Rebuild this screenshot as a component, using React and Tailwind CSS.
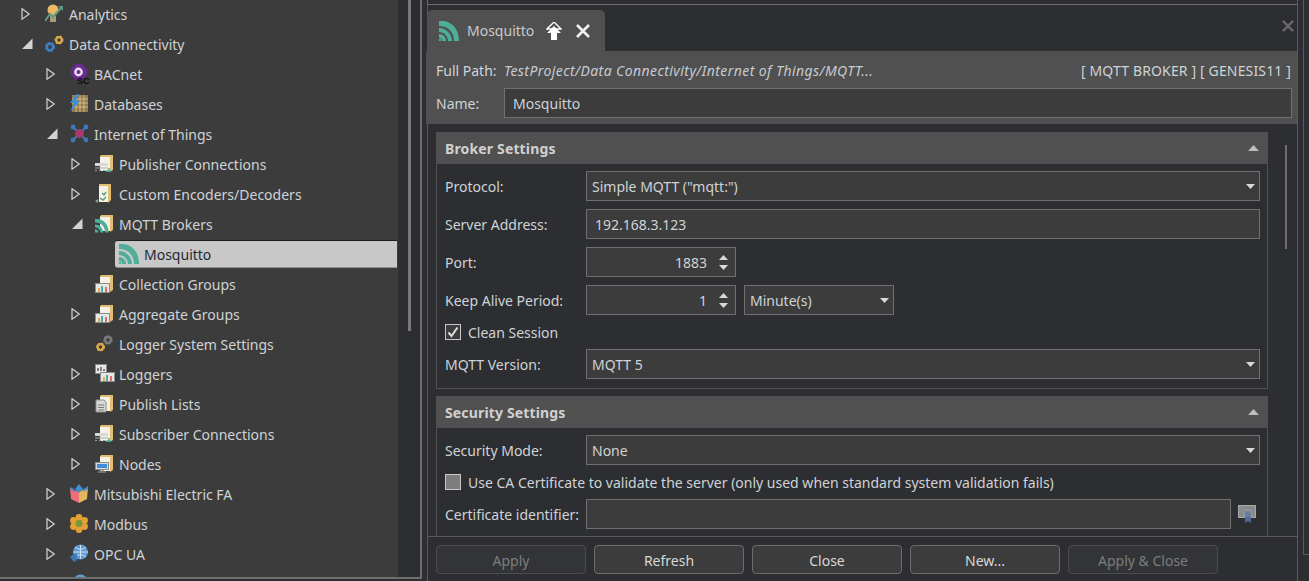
import React from "react";

const Rss = ({ s = 20 }) => (
  <svg width={s} height={s} viewBox="0 0 20 20" className="block">
    <path d="M0 0h3C13 0 20 8 20 20h-5C15 11 9 5 0 5z" fill="#4fae9a" />
    <path d="M0 7c7 0 13 6 13 13H9c0-5-4-9-9-9z" fill="#4fae9a" />
    <path d="M0 13c4 0 7 3 7 7H3c0-2-1-3-3-3z" fill="#4fae9a" />
    <rect x="0" y="18" width="2" height="2" fill="#4fae9a" />
  </svg>
);

const Box = ({ children }) => (
  <svg width="20" height="20" viewBox="0 0 20 20" className="block">{children}</svg>
);

const Folder = () => (
  <>
    <path d="M5 2h10v15H5z" fill="#f4f1e6" />
    <path d="M15 1h3v15l-3 2z" fill="#e3bd72" />
    <path d="M6 1h10l-1 2H5z" fill="#e3bd72" />
  </>
);

const ChartBox = ({ x = 0, y = 9 }) => (
  <>
    <rect x={x + 0.5} y={y + 0.5} width="14" height="9" fill="#e6e6e6" stroke="#8c8c8c" />
    <rect x={x + 3} y={y + 5} width="2" height="4" fill="#e0b050" />
    <rect x={x + 6} y={y + 3} width="2" height="6" fill="#4fae9a" />
    <rect x={x + 10} y={y + 4} width="2" height="5" fill="#e07070" />
  </>
);

const Gear = ({ cx, cy, r, c }) => (
  <g>
    <circle cx={cx} cy={cy} r={r} fill="none" stroke={c} strokeWidth={r * 0.8} />
    <circle cx={cx} cy={cy} r={r * 1.35} fill="none" stroke={c} strokeWidth={r * 0.5} strokeDasharray="2 1.6" />
  </g>
);

const icons = {
  analytics: (
    <Box>
      <circle cx="8" cy="6" r="5.5" fill="#eeb964" />
      <rect x="5" y="12" width="6" height="6" fill="#a89c80" />
      <path d="M0 17 5 10l3 3 8-9" fill="none" stroke="#5f9c86" strokeWidth="2" />
      <path d="M13 2h5v5z" fill="#5f9c86" />
    </Box>
  ),
  data: (
    <Box>
      <Gear cx={5} cy={13} r={3.2} c="#3d7fc0" />
      <Gear cx={14} cy={6} r={2.8} c="#d9a94a" />
    </Box>
  ),
  bacnet: (
    <Box>
      <path d="M6 0h6l5 5v6l-5 5H6L1 11V5z" fill="#6a2a90" />
      <circle cx="8.5" cy="8" r="4.4" fill="#e8dff0" />
      <circle cx="8.5" cy="8" r="2" fill="#6a2a90" />
      <text x="7" y="19.5" fontSize="9" fontWeight="700" fill="#0c0c0c" fontFamily="Liberation Sans, sans-serif">SC</text>
    </Box>
  ),
  databases: (
    <Box>
      <rect x="2" y="1" width="16" height="17" fill="#8f7a55" />
      <path d="M2 5h16M2 9h16M2 13h16M6 1v17M10 1v17M14 1v17" stroke="#d8b878" strokeWidth="1" />
      <path d="M7 0 0 9h4l-4 9 10-11H6l3-7z" fill="#3d8ed8" />
    </Box>
  ),
  iot: (
    <Box>
      <path d="M3 3 16 16M16 3 3 16" stroke="#3d78b8" strokeWidth="2" />
      <circle cx="3" cy="3" r="2.4" fill="#3d78b8" />
      <circle cx="16" cy="3" r="2.4" fill="#3d78b8" />
      <circle cx="3" cy="16" r="2.4" fill="#3d78b8" />
      <circle cx="16" cy="16" r="2.4" fill="#3d78b8" />
      <circle cx="9.5" cy="9.5" r="4.4" fill="#a83a70" />
    </Box>
  ),
  publisher: (
    <Box>
      <Folder />
      <rect x="0" y="9" width="13" height="3" fill="#d8d8d8" />
      <rect x="0" y="13.5" width="13" height="1" fill="#aaaaaa" />
      <path d="M0 16.5h2M4 16.5h2M8 16.5h2" stroke="#999" />
      <path d="M11 17h5M14 14v4" stroke="#4fae9a" strokeWidth="1.5" />
    </Box>
  ),
  encoders: (
    <Box>
      <path d="M4 1h9v17H4z" fill="#f4f1e6" />
      <path d="M13 0h3v16l-3 3z" fill="#e3bd72" />
      <path d="M4 0h10l-1 2H4z" fill="#e3bd72" />
      <path d="M7 9l2 2 2-3M5 14l3 2 3-3" stroke="#5f9c86" fill="none" strokeWidth="1.4" />
      <path d="M0 17l3-2v4z" fill="#8fa890" />
    </Box>
  ),
  brokers: (
    <Box>
      <Folder />
      <g transform="translate(0 5) scale(0.68)">
        <path d="M0 0h3C13 0 20 8 20 20h-5C15 11 9 5 0 5z" fill="#4fae9a" />
        <path d="M0 8c7 0 12 5 12 12H8c0-4-4-8-8-8z" fill="#4fae9a" />
        <path d="M0 15c3 0 5 2 5 5H0z" fill="#4fae9a" />
      </g>
    </Box>
  ),
  collection: (
    <Box>
      <Folder />
      <ChartBox />
    </Box>
  ),
  logger: (
    <Box>
      <Gear cx={5.5} cy={13} r={2.8} c="#d9a94a" />
      <Gear cx={13} cy={6} r={3} c="#7a7a7a" />
    </Box>
  ),
  loggers: (
    <Box>
      <rect x="0.5" y="0.5" width="11" height="9" fill="#e6e6e6" stroke="#8c8c8c" />
      <path d="M3 7V4M6 7V3M9 7V5" stroke="#555" strokeWidth="1.4" />
      <ChartBox x={5} y={8} />
    </Box>
  ),
  lists: (
    <Box>
      <Folder />
      <path d="M1 6h8l2 2v10H1z" fill="#d8d8d8" stroke="#8c8c8c" />
      <path d="M3 11h6M3 13.5h6M3 16h6" stroke="#777" />
    </Box>
  ),
  nodes: (
    <Box>
      <Folder />
      <rect x="0.5" y="8.5" width="13" height="7" fill="#d8d8d8" stroke="#8c8c8c" />
      <rect x="2" y="10" width="10" height="4" fill="#3d8ed8" />
      <path d="M5 16.5h4M3 18h8" stroke="#aaa" />
    </Box>
  ),
  mitsubishi: (
    <Box>
      <path d="M0 4l9 4v11L1 15z" fill="#ee6f78" />
      <path d="M9 8l9-5-1 12-8 4z" fill="#e7b65c" />
      <path d="M5 5l4-5 4 5-4 4z" fill="#3f8fd2" />
      <path d="M0 3l4 2 1 3-4-2zM18 2l-4 3-1 3 5-3z" fill="#3f8fd2" />
    </Box>
  ),
  modbus: (
    <Box>
      <circle cx="9" cy="3.5" r="3.4" fill="#e5a035" />
      <circle cx="9" cy="15.5" r="3.4" fill="#e5a035" />
      <circle cx="3.5" cy="6.5" r="3.4" fill="#e5a035" />
      <circle cx="14.5" cy="6.5" r="3.4" fill="#e5a035" />
      <circle cx="3.5" cy="12.5" r="3.4" fill="#e5a035" />
      <circle cx="14.5" cy="12.5" r="3.4" fill="#e5a035" />
      <circle cx="9" cy="9.5" r="3.2" fill="#6e9a3a" />
    </Box>
  ),
  opc: (
    <Box>
      <circle cx="10.5" cy="8" r="7.5" fill="#5f9bd6" />
      <path d="M3 8h15M10.5 1v14M5 3c3 3 8 3 11 0M5 13c3-3 8-3 11 0" stroke="#d9e7f4" fill="none" strokeWidth="0.9" />
      <path d="M0 13l4-3h3v6l-3 2z" fill="#3d78b8" />
    </Box>
  ),
  globe: (
    <Box>
      <circle cx="10.5" cy="8" r="7.5" fill="#5f9bd6" />
    </Box>
  ),
};

const tree = [
  { l: "pl-[0px]", a: "r", i: "analytics", t: "Analytics" },
  { l: "pl-[0px]", a: "d", i: "data", t: "Data Connectivity" },
  { l: "pl-[25px]", a: "r", i: "bacnet", t: "BACnet" },
  { l: "pl-[25px]", a: "r", i: "databases", t: "Databases" },
  { l: "pl-[25px]", a: "d", i: "iot", t: "Internet of Things" },
  { l: "pl-[50px]", a: "r", i: "publisher", t: "Publisher Connections" },
  { l: "pl-[50px]", a: "r", i: "encoders", t: "Custom Encoders/Decoders" },
  { l: "pl-[50px]", a: "d", i: "brokers", t: "MQTT Brokers" },
  { sel: true },
  { l: "pl-[50px]", i: "collection", t: "Collection Groups" },
  { l: "pl-[50px]", a: "r", i: "collection", t: "Aggregate Groups" },
  { l: "pl-[50px]", i: "logger", t: "Logger System Settings" },
  { l: "pl-[50px]", a: "r", i: "loggers", t: "Loggers" },
  { l: "pl-[50px]", a: "r", i: "lists", t: "Publish Lists" },
  { l: "pl-[50px]", a: "r", i: "publisher", t: "Subscriber Connections" },
  { l: "pl-[50px]", a: "r", i: "nodes", t: "Nodes" },
  { l: "pl-[25px]", a: "r", i: "mitsubishi", t: "Mitsubishi Electric FA" },
  { l: "pl-[25px]", a: "r", i: "modbus", t: "Modbus" },
  { l: "pl-[25px]", a: "r", i: "opc", t: "OPC UA" },
  { l: "pl-[25px]", a: "r", i: "globe", t: "" },
];

const Arrow = ({ kind }) => {
  if (kind === "r")
    return (
      <svg width="12" height="12" viewBox="0 0 12 12" className="block">
        <path d="M1 .8 8.2 6 1 11.2z" fill="none" stroke="#d2d2d2" strokeWidth="1.2" />
      </svg>
    );
  if (kind === "d")
    return (
      <svg width="12" height="12" viewBox="0 0 12 12" className="block">
        <path d="M1 11 11.5 11V.5z" fill="#d2d2d2" />
      </svg>
    );
  return null;
};

const TreeRow = ({ r }) => {
  if (r.sel)
    return (
      <div className="h-[30px] pl-[115px] pr-px pt-px">
        <div className="h-[28px] flex items-center pl-1 bg-[#c8c8c8] border-t border-t-[#1e1e1e] border-b border-b-[#8e8e8e] rounded-l-[3px] text-[#1f2a36]">
          <Rss />
          <span className="ml-[5px]">Mosquitto</span>
        </div>
      </div>
    );
  return (
    <div className={`h-[30px] flex items-center ${r.l}`}>
      <div className="w-[12px] ml-[21px]"><Arrow kind={r.a} /></div>
      <div className="w-[20px] ml-[12px] shrink-0">{icons[r.i]}</div>
      <span className="ml-[4px] whitespace-nowrap">{r.t}</span>
    </div>
  );
};

const Caret = () => (
  <svg width="9" height="5" viewBox="0 0 9 5" className="block"><path d="M0 0h9L4.5 5z" fill="#d8d8d8" /></svg>
);
const CaretUp = ({ w = 9, h = 5, c = "#d8d8d8" }) => (
  <svg width={w} height={h} viewBox="0 0 9 5" className="block"><path d="M0 5h9L4.5 0z" fill={c} /></svg>
);

const Field = ({ w = "flex-1", children, className = "" }) => (
  <div className={`h-[30px] ${w} flex items-center px-[5px] bg-[#3c3c3c] border border-[#707070] whitespace-nowrap ${className}`}>
    {children}
  </div>
);

const Combo = ({ w, text }) => (
  <Field w={w} className="justify-between pr-[4px]">
    <span>{text}</span>
    <Caret />
  </Field>
);

const Spin = ({ value }) => (
  <div className="h-[30px] w-[150px] flex items-center justify-end pr-[7px] bg-[#3c3c3c] border border-[#707070]">
    <span>{value}</span>
    <div className="ml-[12px] flex flex-col gap-[5px]">
      <CaretUp />
      <Caret />
    </div>
  </div>
);

const Row = ({ label, children, className = "mt-2" }) => (
  <div className={`flex items-center ${className}`}>
    <span className="w-[141px] shrink-0 whitespace-nowrap">{label}</span>
    {children}
  </div>
);

const Check = ({ on, label }) => (
  <div className="flex items-center h-[16px] mt-[9px]">
    <div className={`w-[16px] h-[16px] border border-[#c8c8c8] flex items-center justify-center ${on ? "bg-[#3c3c3c]" : "bg-[#7d7d7d]"}`}>
      {on && (
        <svg width="12" height="12" viewBox="0 0 12 12" className="block">
          <path d="M1.5 6.5 4.5 10 10.5 1.5" fill="none" stroke="#dcdcdc" strokeWidth="2" />
        </svg>
      )}
    </div>
    <span className="ml-[7px] whitespace-nowrap">{label}</span>
  </div>
);

const Group = ({ title, children, className = "" }) => (
  <div className={className}>
    <div className="h-[32px] bg-[#505050] flex items-center justify-between pl-[9px] pr-[9px] w-[832px]">
      <span className="font-bold text-[#d0d0d0] tracking-[0.15px]">{title}</span>
      <CaretUp w={11} h={6} c="#bdbdbd" />
    </div>
    <div className="border-x border-b border-[#505050] pl-[8px] pr-[7px] pt-[7px] pb-[9px] w-[832px]">{children}</div>
  </div>
);

const Btn = ({ children, off }) => (
  <button className={`w-[150px] h-[29px] pt-[2px] rounded-[4px] border flex items-center justify-center ${off ? "border-[#4c4c4c] bg-[#333437] text-[#7c7c7c]" : "border-[#6c6c6c] bg-[#3c3c3c] text-[#d8d8d8]"}`}>
    {children}
  </button>
);

export default function App() {
  return (
    <div className="w-[1309px] h-[581px] flex overflow-hidden bg-[#2d2e32] text-[#cfd3d6] text-[14px] tracking-normal font-['Open_Sans','Noto_Sans',sans-serif]">
      {/* tree */}
      <div className="w-[422px] h-[579px] shrink-0 flex border-r-2 border-b-2 border-[#6e6e6e]">
        <div className="w-[398px] bg-[#3c3c3c] overflow-hidden">
          <div className="-mt-px">
            {tree.map((r, i) => <TreeRow key={i} r={r} />)}
          </div>
        </div>
        <div className="w-[22px] pl-[10px]">
          <div className="w-[3px] h-[331px] bg-[#7a7a7a]" />
        </div>
      </div>

      {/* editor */}
      <div className="ml-[5px] w-[871px] shrink-0 flex flex-col h-[581px] border-r border-[#5a5a5a]">
        <div className="h-[5px] border-b border-l border-[#6e6e6e]" />
        <div className="h-[46px] flex justify-between pt-[5px] border-l border-[#5a5a5a]">
          <div className="w-[178px] -ml-px h-[41px] bg-[#505050] rounded-t-[5px] flex items-center pl-3">
            <Rss />
            <span className="ml-2 text-[#c6c9cb]">Mosquitto</span>
            <svg width="16" height="18" viewBox="0 0 16 18" className="block ml-3">
              <path d="M8 0 15 7H1z" fill="none" stroke="#fff" strokeWidth="1.4" />
              <path d="M8 4 15 11H11V18H5V11H1z" fill="#fff" />
            </svg>
            <svg width="16" height="16" viewBox="0 0 16 16" className="block ml-[13px]">
              <path d="M2 2 14 14M14 2 2 14" stroke="#f2f2f2" strokeWidth="2.6" />
            </svg>
          </div>
          <svg width="12" height="12" viewBox="0 0 12 12" className="block mt-[10px] mr-[3px]">
            <path d="M1 1 11 11M11 1 1 11" stroke="#6c6c6c" strokeWidth="2.4" />
          </svg>
        </div>

        <div className="h-[73px] bg-[#505050] pl-[10px] pr-[5px] -ml-px">
          <div className="h-[37px] pt-[2px] flex items-center justify-between">
            <div className="flex">
              <span className="w-[68px]">Full Path:</span>
              <span className="italic text-[#c6cbd0] tracking-[0.42px]">TestProject/Data Connectivity/Internet of Things/MQTT...</span>
            </div>
            <span className="mr-px tracking-[0.15px]">[ MQTT BROKER ] [ GENESIS11 ]</span>
          </div>
          <div className="flex items-center">
            <span className="w-[68px] shrink-0">Name:</span>
            <Field w="w-[788px] shrink-0"><span className="pl-[3px] text-[#cbd3d9]">Mosquitto</span></Field>
          </div>
        </div>

        <div className="h-[412px] flex overflow-hidden border-l border-[#5a5a5a]">
          <div className="w-[840px] shrink-0 pl-2 pt-2">
            <Group title="Broker Settings">
              <Row label="Protocol:" className=""><Combo w="flex-1" text={'Simple MQTT ("mqtt:")'} /></Row>
              <Row label="Server Address:"><Field><span className="pl-[3px]">192.168.3.123</span></Field></Row>
              <Row label="Port:"><Spin value="1883" /></Row>
              <Row label="Keep Alive Period:">
                <Spin value="1" />
                <Combo w="w-[150px] ml-2" text="Minute(s)" />
              </Row>
              <Check on label="Clean Session" />
              <Row label="MQTT Version:" className="mt-[9px]"><Combo w="flex-1" text="MQTT 5" /></Row>
            </Group>
            <Group title="Security Settings" className="mt-[7px]">
              <Row label="Security Mode:" className=""><Combo w="flex-1" text="None" /></Row>
              <Check label="Use CA Certificate to validate the server (only used when standard system validation fails)" />
              <Row label="Certificate identifier:" className="mt-[9px]">
                <Field w="w-[645px]" />
                <svg width="18" height="18" viewBox="0 0 18 18" className="block ml-[7px] shrink-0">
                  <rect x="0.5" y="0.5" width="17" height="12" fill="#8a8a8a" stroke="#a8a8a8" />
                  <circle cx="10" cy="9" r="4" fill="#6a7c98" stroke="#8ea0ba" />
                  <path d="M7 12v6l3-2 3 2v-6z" fill="#4f6a96" />
                </svg>
              </Row>
            </Group>
          </div>
          <div className="flex-1 pl-[17px] pt-[21px]">
            <div className="w-[2px] h-[104px] bg-[#6e6e6e]" />
          </div>
        </div>

        <div className="flex-1 border-t border-[#5a5a5a] border-l flex gap-2 pl-2 pt-2">
          <Btn off>Apply</Btn>
          <Btn>Refresh</Btn>
          <Btn>Close</Btn>
          <Btn>New...</Btn>
          <Btn off>Apply &amp; Close</Btn>
        </div>
      </div>

      <div className="ml-[5px] w-[6px] h-[555px] border-l border-b border-[#5a5a5a]" />
    </div>
  );
}
